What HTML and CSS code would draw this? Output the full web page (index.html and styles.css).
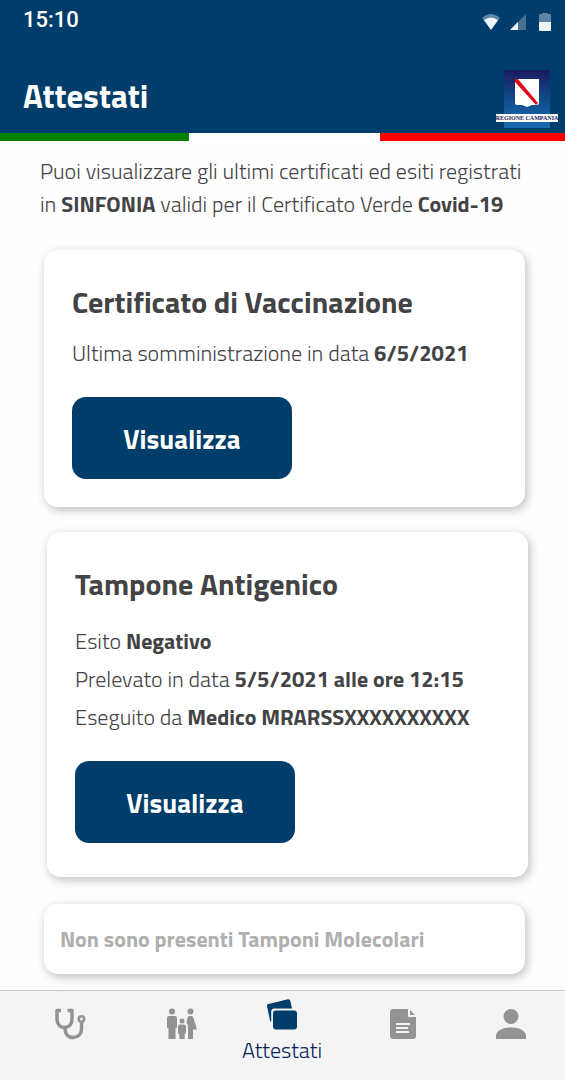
FILE: index.html
```html
<!DOCTYPE html>
<html lang="it">
<head>
  <meta charset="UTF-8">
  <meta name="viewport" content="width=device-width, initial-scale=1.0">
  <title>Attestati</title>
  <link rel="stylesheet" href="styles.css">
</head>
<body>
  <header class="header">
    <div class="status-bar">
      <span class="time">15:10</span>
      <svg class="status-icons" viewBox="0 0 70 20" aria-hidden="true">
        <path d="M0 5Q9 -3 18 5L9 17Z" fill="#5c84a3"/>
        <path d="M2 7Q9 2 16 7L9 17Z" fill="#eef3f7"/>
        <path d="M44 1V17H28Z" fill="#46708f"/>
        <path d="M36 9V17H28Z" fill="#eef3f7"/>
        <path d="M57 2Q57 1 58 1H60V0H66V1H68Q69 1 69 2V9H57Z" fill="#5c84a3"/>
        <path d="M57 9H69V17Q69 18 68 18H58Q57 18 57 17Z" fill="#eef3f7"/>
      </svg>
    </div>
    <div class="title-bar">
      <h1>Attestati</h1>
      <svg class="logo" viewBox="0 0 62 58" role="img" aria-label="Regione Campania">
        <defs>
          <linearGradient id="logoBlue" x1="0" y1="0" x2="0" y2="1">
            <stop offset="0" stop-color="#1b1b60"/>
            <stop offset="0.5" stop-color="#104a8c"/>
            <stop offset="1" stop-color="#1a6db0"/>
          </linearGradient>
        </defs>
        <rect x="8" width="46" height="58" fill="url(#logoBlue)"/>
        <path d="M19 9H43V33Q43 35 40 35H36L31 37L26 35H22Q19 35 19 33Z" fill="#fff"/>
        <path d="M19 9H22L42 33L40 35L19 12Z" fill="#e20a17"/>
        <rect y="44" width="62" height="8" fill="#fff"/>
        <text x="31" y="50" text-anchor="middle" class="logo-text">REGIONE CAMPANIA</text>
      </svg>
    </div>
  </header>
  <div class="flag"></div>

  <main class="content">
    <p class="intro">Puoi visualizzare gli ultimi certificati ed esiti registrati in <b>SINFONIA</b> validi per il Certificato Verde <b>Covid-19</b></p>

    <section class="card">
      <h2>Certificato di Vaccinazione</h2>
      <p>Ultima somministrazione in data <b>6/5/2021</b></p>
      <button type="button" class="btn">Visualizza</button>
    </section>

    <section class="card card-test">
      <h2>Tampone Antigenico</h2>
      <p>Esito <b>Negativo</b></p>
      <p>Prelevato in data <b>5/5/2021 alle ore 12:15</b></p>
      <p>Eseguito da <b>Medico MRARSSXXXXXXXXXX</b></p>
      <button type="button" class="btn">Visualizza</button>
    </section>

    <section class="card card-empty">
      <p>Non sono presenti Tamponi Molecolari</p>
    </section>
  </main>

  <nav class="tabs">
    <a href="#" aria-label="Medico">
      <svg viewBox="0 0 32 32" fill="none" stroke="currentColor" stroke-width="3.5" stroke-linejoin="round">
        <path d="M7 2.5H3V11C3 16 6 19.500 10.500 19.500S18 16 18 11V2.500H13.500"/>
        <path d="M11 20C11 26 14 29.500 19 29.500S27.500 26 27.500 21V14"/>
        <circle cx="27.500" cy="11" r="2.700" stroke-width="2.500"/>
      </svg>
    </a>
    <a href="#" aria-label="Famiglia">
      <svg viewBox="0 0 32 32" fill="currentColor">
        <circle cx="6" cy="3.500" r="3"/>
        <path d="M3 8H9Q11 8 11 10V20H9.500V31H2.500V20H1V10Q1 8 3 8Z"/>
        <circle cx="16" cy="13" r="2.500"/>
        <path d="M14 16.500H18Q20 16.500 20 18.500V25.500H18.700V31H13.300V25.500H12V18.500Q12 16.500 14 16.500Z"/>
        <circle cx="24.500" cy="3.500" r="3"/>
        <path d="M23.500 8H25.500Q27 8 27.500 10L31 21.500H27V31H22V18Q22 16 20.500 15L21.500 10Q22 8 23.500 8Z"/>
      </svg>
    </a>
    <a href="#" class="active">
      <svg viewBox="0 0 32 32" fill="currentColor">
        <path d="M2.500 5L22 0.200Q23.800 0 24.300 1.800L26 9.500H8.500Q5.200 9.500 5.200 12.500V22.500H4.200L1 7Q0.800 5.400 2.500 5Z"/>
        <rect x="7" y="11.500" width="24" height="19" rx="3"/>
      </svg>
      <span>Attestati</span>
    </a>
    <a href="#" aria-label="Documenti">
      <svg viewBox="0 0 32 32">
        <path d="M6 1H21V8Q21 9 22 9H29V28Q29 31 26 31H6Q3 31 3 28V4Q3 1 6 1Z" fill="currentColor"/>
        <path d="M23 2L28 7H23Z" fill="currentColor"/>
        <path d="M9 16H23M9 20H21M9 24H22" stroke="#f4f4f4" stroke-width="2"/>
      </svg>
    </a>
    <a href="#" aria-label="Profilo">
      <svg viewBox="0 0 32 32" fill="currentColor">
        <circle cx="16" cy="8.500" r="7.500"/>
        <path d="M1 31V28C1 22 9 19.500 16 19.500S31 22 31 28V31Z"/>
      </svg>
    </a>
  </nav>
</body>
</html>
```
FILE: styles.css
```css
* {
    box-sizing: border-box;
}

body {
    margin: 0;
    min-height: 100vh;
    display: flex;
    flex-direction: column;
    font-family: 'Titillium Web', 'Roboto', sans-serif;
    font-size: 22px;
    font-weight: 300;
    color: #434345;
    background-color: #fefefe;
}

h1, h2, p {
    margin: 0;
}

b {
    font-weight: 700;
}

/* Header */
.header {
    background-color: #003d6a;
    color: #ffffff;
}

.status-bar {
    display: flex;
    justify-content: space-between;
    align-items: center;
    height: 38px;
    padding: 0 13px 0 23px;
}

.time {
    font-family: 'Roboto', sans-serif;
    font-weight: 500;
}

.status-icons {
    width: 70px;
    height: 20px;
    margin-top: 8px;
}

.title-bar {
    display: flex;
    justify-content: space-between;
    align-items: flex-start;
    padding: 32px 7px 5px 23px;
}

h1 {
    font-size: 33px;
    line-height: 52px;
    font-weight: 700;
}

.logo {
    width: 62px;
    height: 58px;
}

.logo-text {
    font-family: 'Liberation Serif', serif;
    font-size: 6px;
    font-weight: 700;
    fill: #1b1b60;
}

.flag {
    height: 8px;
    background: linear-gradient(to right, #058205 33.5%, #ffffff 33.5%, #ffffff 67.2%, #ff0000 67.2%);
}

/* Cards */
.content {
    flex: 1;
    padding: 14px 37px 16px 40px;
}

.intro {
    line-height: 33px;
}

.card {
    margin: 29px 3px 0 4px;
    padding: 32px 28px 28px;
    border-radius: 14px;
    background-color: #ffffff;
    box-shadow: 2px 3px 8px 1px rgba(0, 0, 0, 0.22);
}

.card h2 {
    margin-bottom: 12px;
    font-size: 30px;
    line-height: 40px;
    font-weight: 700;
}

.card p {
    line-height: 38px;
}

.btn {
    display: block;
    width: 220px;
    height: 82px;
    margin-top: 25px;
    border: none;
    border-radius: 14px;
    background-color: #003d6a;
    color: #ffffff;
    font-family: inherit;
    font-size: 27px;
    font-weight: 700;
    cursor: pointer;
}

.card-test {
    margin: 25px 0 0 7px;
    padding-bottom: 34px;
}

.card-test h2 {
    margin-bottom: 18px;
}

.card-empty {
    margin-top: 27px;
    padding: 16px;
    color: #afafaf;
}

.card-empty p {
    font-weight: 700;
}

/* Bottom navigation */
.tabs {
    display: grid;
    grid-template-columns: 116fr 108fr 92fr 150fr 66fr;
    height: 90px;
    padding: 0 21px 0 12px;
    border-top: 1px solid #c8c8c8;
    background-color: #f4f4f4;
}

.tabs a {
    display: flex;
    flex-direction: column;
    align-items: center;
    padding-top: 17px;
    color: #939393;
    text-decoration: none;
}

.tabs svg {
    width: 32px;
    height: 32px;
}

.tabs .active {
    padding-top: 8px;
    color: #003d6a;
}

.tabs span {
    margin-top: 5px;
    line-height: 28px;
    color: #0a1f5c;
}
```
